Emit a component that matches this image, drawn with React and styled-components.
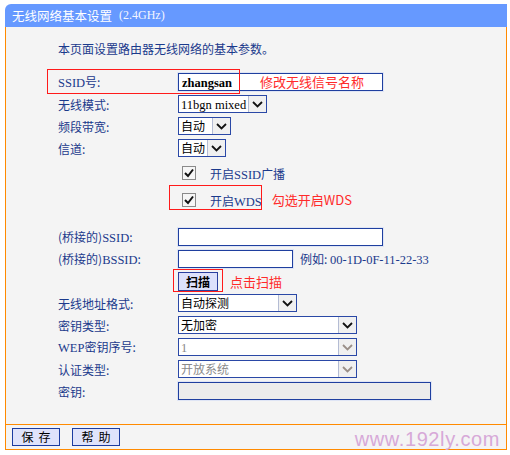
import React from 'react';
import styled, { createGlobalStyle } from 'styled-components';

const GlobalStyle = createGlobalStyle`
  body {
    margin: 0;
    background: #fff;
    font-family: "Noto Sans CJK SC", sans-serif;
  }
`;

const Frame = styled.div`
  position: relative;
  width: 502px;
  margin: 4px 0 0 5px;
`;

const Header = styled.div`
  height: 23px;
  background: #6699ff;
  border-top-left-radius: 6px;
  color: #fff;
  font-size: 12.5px;
  display: flex;
  align-items: center;
  padding-left: 7px;
`;

const HeaderNote = styled.span`
  font-family: "Liberation Serif", serif;
  font-size: 12px;
  margin-left: 7px;
  color: #f4f6ff;
`;

const Panel = styled.div`
  background: #f4f4f4;
  border-left: 1px solid #ff8a00;
  border-right: 1px solid #ff8a00;
  border-bottom: 1px solid #ff8a00;
  padding: 10px 0 22px 52px;
  color: #1b3a8c;
  font-size: 12px;
`;

const Latin = styled.span`
  font-family: "Liberation Serif", serif;
  font-size: 12.5px;
`;

const Row = styled.div`
  position: relative;
  display: flex;
  align-items: center;
  height: ${p => p.$h || 22}px;
  margin-top: ${p => p.$mt || 0}px;
`;

const Label = styled.div`
  width: 120px;
  flex: none;
  white-space: nowrap;
`;

const RedBox = styled.div`
  position: absolute;
  z-index: 2;
  left: ${p => p.$x}px;
  top: ${p => p.$y}px;
  width: ${p => p.$w}px;
  height: ${p => p.$h}px;
  box-sizing: border-box;
  border: 1px solid #ff1a1a;
  pointer-events: none;
`;

const Note = styled.span`
  color: #ff2a2a;
  font-size: 13px;
  white-space: nowrap;
  margin-left: ${p => p.$ml || 0}px;
`;

const FloatNote = styled(Note)`
  position: absolute;
  left: ${p => p.$x}px;
  top: 50%;
  transform: translateY(-52%);
`;

const TextBox = styled.div`
  box-sizing: border-box;
  width: ${p => p.$w}px;
  height: 18px;
  border: 1px solid #1f3f9f;
  box-shadow: 0 0 0 1px #dfe5f5;
  background: ${p => (p.$disabled ? '#ececec' : '#fff')};
  color: #000;
  padding-left: 3px;
  line-height: 16px;
  font-weight: bold;
`;

const SelectBox = styled.div`
  box-sizing: border-box;
  display: flex;
  width: ${p => p.$w}px;
  height: 18px;
  border: 1px solid #2a48a6;
  background: #fff;
  color: ${p => (p.$disabled ? '#8a8a8a' : '#000')};
`;

const SelectText = styled.span`
  flex: 1;
  padding-left: 2px;
  line-height: 16px;
  white-space: nowrap;
  overflow: hidden;
`;

const Arrow = styled.span`
  width: 17px;
  flex: none;
  display: flex;
  align-items: center;
  justify-content: center;
  background: #f0f0f0;
  border-left: 1px solid #b4bcd4;
`;

const CheckWrap = styled.div`
  display: flex;
  align-items: center;
  padding-left: 4px;
`;

const CheckText = styled.span`
  margin-left: 14px;
  padding-top: 2px;
`;

const Example = styled.span`
  margin-left: 7px;
`;

const ScanButton = styled.div`
  box-sizing: border-box;
  width: 40px;
  height: 19px;
  border: 1px solid #2b3f9e;
  background: #dde1fb;
  color: #000;
  font-weight: bold;
  text-align: center;
  line-height: 17px;
`;

const Footer = styled.div`
  display: flex;
  align-items: center;
  gap: 12px;
  height: 24px;
  padding-left: 6px;
  background: #f4f4f4;
  border-left: 1px solid #ff8a00;
  border-right: 1px solid #ff8a00;
  border-bottom: 1px solid #ff8a00;
`;

const FootButton = styled.div`
  box-sizing: border-box;
  width: 48px;
  height: 18px;
  border: 1px solid #1c3ca0;
  background: #dfe3fb;
  color: #000;
  font-size: 12px;
  text-align: center;
  line-height: 16px;
  letter-spacing: 5px;
  text-indent: 5px;
`;

const Watermark = styled.div`
  position: absolute;
  right: 7px;
  bottom: 1px;
  font-family: "Liberation Sans", Arial, sans-serif;
  font-size: 20px;
  line-height: 20px;
  letter-spacing: 0.6px;
  color: #d7a9d8;
`;

const Chevron = ({ disabled }) => (
  <svg width="11" height="7" viewBox="0 0 11 7">
    <polyline
      points="1,1 5.5,5.5 10,1"
      fill="none"
      stroke={disabled ? '#9a8f88' : '#111'}
      strokeWidth="1.8"
    />
  </svg>
);

const Select = ({ w, disabled, children }) => (
  <SelectBox $w={w} $disabled={disabled}>
    <SelectText>{children}</SelectText>
    <Arrow>
      <Chevron disabled={disabled} />
    </Arrow>
  </SelectBox>
);

const Check = () => (
  <svg width="14" height="14" viewBox="0 0 14 14">
    <rect x="0.5" y="0.5" width="13" height="13" fill="#f6f6f6" stroke="#8a8a8a" />
    <polyline points="3,7 6,10 11,3.5" fill="none" stroke="#111" strokeWidth="2" />
  </svg>
);

export default function App() {
  return (
    <>
      <GlobalStyle />
      <Frame>
        <Header>
          无线网络基本设置<HeaderNote>(2.4GHz)</HeaderNote>
        </Header>
        <Panel>
          <Row>本页面设置路由器无线网络的基本参数。</Row>

          <Row $mt={12}>
            <Label>
              <Latin>SSID</Latin>号:
            </Label>
            <TextBox $w={205}>
              <Latin>zhangsan</Latin>
            </TextBox>
            <FloatNote $x={202}>修改无线信号名称</FloatNote>
            <RedBox $x={-11} $y={-2} $w={193} $h={25} />
          </Row>
          <Row>
            <Label>无线模式:</Label>
            <Select w={89}>
              <Latin>11bgn mixed</Latin>
            </Select>
          </Row>
          <Row>
            <Label>频段带宽:</Label>
            <Select w={53}>自动</Select>
          </Row>
          <Row>
            <Label>信道:</Label>
            <Select w={48}>自动</Select>
          </Row>

          <Row $h={27}>
            <Label />
            <CheckWrap>
              <Check />
              <CheckText>
                开启<Latin>SSID</Latin>广播
              </CheckText>
            </CheckWrap>
          </Row>
          <Row $h={27}>
            <Label />
            <CheckWrap>
              <Check />
              <CheckText>
                开启<Latin>WDS</Latin>
              </CheckText>
              <Note $ml={10}>勾选开启WDS</Note>
            </CheckWrap>
            <RedBox $x={111} $y={-1} $w={93} $h={25} />
          </Row>

          <Row $mt={13}>
            <Label>
              (桥接的)<Latin>SSID</Latin>:
            </Label>
            <TextBox $w={205} />
          </Row>
          <Row>
            <Label>
              (桥接的)<Latin>BSSID</Latin>:
            </Label>
            <TextBox $w={115} />
            <Example>
              例如: <Latin>00-1D-0F-11-22-33</Latin>
            </Example>
          </Row>
          <Row>
            <Label />
            <ScanButton>扫描</ScanButton>
            <Note $ml={12}>点击扫描</Note>
            <RedBox $x={115} $y={-1} $w={50} $h={23} />
          </Row>
          <Row>
            <Label>无线地址格式:</Label>
            <Select w={119}>自动探测</Select>
          </Row>
          <Row>
            <Label>密钥类型:</Label>
            <Select w={179}>无加密</Select>
          </Row>
          <Row>
            <Label>
              <Latin>WEP</Latin>密钥序号:
            </Label>
            <Select w={179} disabled>
              <Latin>1</Latin>
            </Select>
          </Row>
          <Row>
            <Label>认证类型:</Label>
            <Select w={179} disabled>
              开放系统
            </Select>
          </Row>
          <Row>
            <Label>密钥:</Label>
            <TextBox $w={253} $disabled />
          </Row>
        </Panel>
        <Footer>
          <FootButton>保存</FootButton>
          <FootButton>帮助</FootButton>
        </Footer>
        <Watermark>www.192ly.com</Watermark>
      </Frame>
    </>
  );
}
